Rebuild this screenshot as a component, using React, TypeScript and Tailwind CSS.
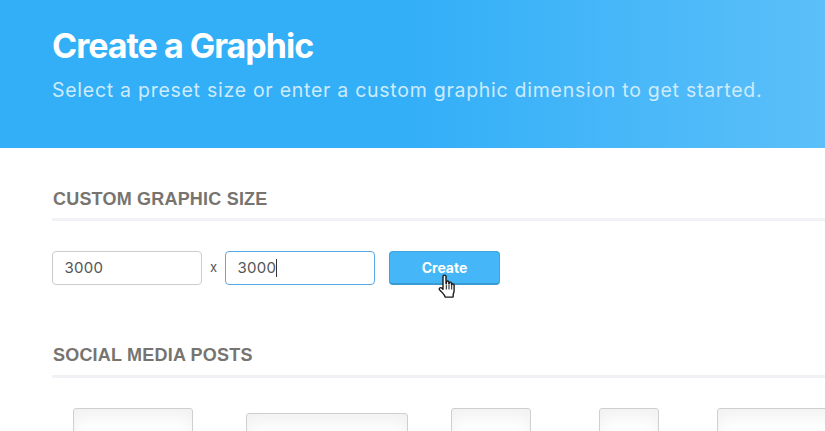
function Hand() {
  return (
    <svg className="absolute left-[438px] top-[273px]" width="19" height="26" viewBox="0 0 19 26">
      <path
        d="M5 3.200c0-1.500 3-1.500 3 0v7.300l.4-.1V9c0-1.300 2.300-1.300 2.400 0v1.600l.4.1V10c.1-1.200 2.200-1.200 2.300.1v1.300l.4.1c.2-1 2.100-.9 2.200.4v5.600c0 1.700-.5 2.600-.9 3.600v2.400c0 .4-.2.600-.6.600H7.700c-.3 0-.5-.1-.6-.4-.5-1.400-1.400-2.500-2.600-3.800L1.700 16.900c-1.100-1.300.5-3 2-1.900L5 16.300V3.200z"
        fill="#fff"
        stroke="#1a1a1a"
        strokeWidth="1.400"
        strokeLinejoin="round"
      />
      <path d="M8.300 11.500v5M11 11.500v5M13.700 12v4.500" fill="none" stroke="#1a1a1a" strokeWidth="1" />
    </svg>
  );
}

function SectionHeading({ children, pad }: { children: string; pad: string }) {
  return (
    <div className={`border-b-[3px] border-[#f2f2f6] h-[42px] pl-px ${pad}`}>
      <h2 className="text-[18px] leading-[20px] tracking-[0.2px] font-bold text-[#77746f] font-['Liberation_Sans',sans-serif]">
        {children}
      </h2>
    </div>
  );
}

function Card({ className }: { className: string }) {
  return (
    <div
      className={`shrink-0 h-[120px] rounded-[3px] border border-[#cfcfcf] bg-white shadow-[inset_0_8px_16px_rgba(0,0,0,0.06)] ${className}`}
    />
  );
}

export default function App() {
  return (
    <div className="relative h-[431px] w-[825px] overflow-hidden bg-white font-['Inter',sans-serif]">
      <header className="h-[148px] px-[52px] pt-[27px] bg-[linear-gradient(90deg,#33aff8_0%,#33aff8_50%,#5bbff9_100%)]">
        <h1 className="text-[34px] leading-[38px] font-bold tracking-[-1px] text-white">Create a Graphic</h1>
        <p className="mt-[13px] text-[19.5px] leading-[24px] tracking-[0.73px] text-[#cdebfd] whitespace-nowrap">
          Select a preset size or enter a custom graphic dimension to get started.
        </p>
      </header>
      <main className="pl-[52px]">
        <section className="pt-[31px]">
          <SectionHeading pad="pt-[10px]">CUSTOM GRAPHIC SIZE</SectionHeading>
          <div className="mt-[30px] flex items-center">
            <div className="w-[150px] h-[34px] rounded-[4px] border border-[#cccccc] pl-[11.500px] text-[15px] leading-[32px] text-[#555555] tracking-[0.3px]">
              3000
            </div>
            <span className="w-[23px] text-center text-[13px] text-[#555555]">x</span>
            <div className="w-[150px] h-[34px] rounded-[4px] border border-[#5aa9e6] pl-[11.500px] text-[15px] leading-[32px] text-[#555555] tracking-[0.3px] flex items-center">
              <span>3000</span>
              <span className="w-px h-[18px] bg-[#333333]" />
            </div>
            <button className="ml-[14px] w-[111px] h-[34px] rounded-[4px] bg-[#45b6f7] border border-[#3fa3dd] border-b-[2px] border-b-[#3a9ad4] text-[14px] font-bold text-white">
              Create
            </button>
          </div>
        </section>
        <section className="mt-[51px]">
          <SectionHeading pad="pt-[9px]">SOCIAL MEDIA POSTS</SectionHeading>
          <div className="mt-[30px] flex items-start pl-[21px]">
            <Card className="w-[120px]" />
            <Card className="w-[162px] ml-[53px] mt-[5px]" />
            <Card className="w-[80px] ml-[43px]" />
            <Card className="w-[60px] ml-[68px]" />
            <Card className="w-[160px] ml-[58px]" />
          </div>
        </section>
      </main>
      <Hand />
    </div>
  );
}
